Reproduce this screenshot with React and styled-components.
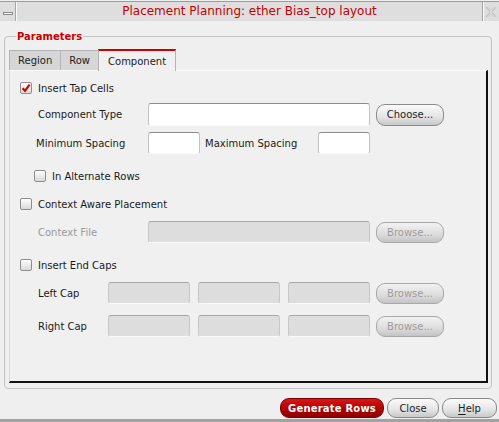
import React from 'react';
import styled, { createGlobalStyle } from 'styled-components';

const GlobalStyle = createGlobalStyle`
    html, body {
        margin: 0;
        padding: 0;
        background: #efefef;
    }
    body {
        font-family: "DejaVu Sans", Verdana, sans-serif;
        font-size: 10px;
        color: #1e1e1e;
    }
`

const Window = styled.div`
    width: 499px;
    height: 422px;
    display: flex;
    flex-direction: column;
    background: #efefef;
    overflow: hidden;
`

const TitleBar = styled.div`
    display: flex;
    height: 19px;
    margin-top: 1px;
    border-top: 1px solid #9c9c9c;
    background: #dedede;
`

const TitleButton = styled.div`
    width: ${p => p.$w}px;
    display: flex;
    align-items: center;
    justify-content: center;
    border-left: ${p => (p.$side === 'right' ? '1px solid #a6a6a6' : 'none')};
    border-right: ${p => (p.$side === 'left' ? '1px solid #a6a6a6' : 'none')};
    box-shadow: ${p => (p.$side === 'left' ? '1px 0 0 #fafafa' : 'inset 1px 0 0 #fafafa')};
`

const TitleText = styled.div`
    flex: 1;
    display: flex;
    align-items: center;
    justify-content: center;
    margin-left: 1px;
    font-size: 12px;
    color: #c40000;
    padding-bottom: 1px;
`

const Body = styled.div`
    flex: 1;
    display: flex;
    flex-direction: column;
    padding: 9px 0 0 4px;
    min-height: 0;
`

const Group = styled.fieldset`
    flex: 1;
    margin: 0 7px 0 0;
    padding: 5px 3px 5px 4px;
    border: 1px solid #c4c4c4;
    border-radius: 4px;
    display: flex;
    flex-direction: column;
    min-width: 0;
    min-height: 0;
`

const Legend = styled.legend`
    margin-left: 7px;
    padding: 0 1px;
    font-weight: bold;
    font-size: 10px;
    line-height: 13px;
    color: #cc0000;
`

const TabBar = styled.div`
    display: flex;
    align-items: flex-end;
    height: 22px;
`

const Tab = styled.div`
    height: 20px;
    padding: 0 ${p => (p.$active ? 9 : 8)}px;
    display: flex;
    align-items: center;
    box-sizing: border-box;
    background: ${p => (p.$active ? '#f0f0f0' : '#d6d6d6')};
    border: 1px solid #b4b4b4;
    border-bottom: none;
    border-top: ${p => (p.$active ? '2px solid #cc0000' : '1px solid #b4b4b4')};
    margin-left: -1px;
    color: #222;
    &:first-child { margin-left: 0; }
    ${p => p.$active && 'height: 22px; margin-bottom: -1px; position: relative; z-index: 1;'}
`

const TabPanel = styled.div`
    flex: 1;
    display: flex;
    flex-direction: column;
    border-top: 1px solid #fbfbfb;
    border-left: 1px solid #d8d8d8;
    border-right: 2px solid #111;
    border-bottom: 2px solid #111;
    padding-left: 10px;
    background: #f0f0f0;
`

const Row = styled.div`
    display: flex;
    align-items: center;
    height: ${p => p.$h}px;
    margin-top: ${p => p.$mt}px;
    padding-left: ${p => p.$indent || 0}px;
`

const Box = styled.span`
    width: 12px;
    height: 12px;
    box-sizing: border-box;
    border: 1px solid #8e8e8e;
    border-radius: 2px;
    background: linear-gradient(#fdfdfd, #dadada);
    display: flex;
    align-items: center;
    justify-content: center;
    margin-right: 6px;
    flex-shrink: 0;
`

const Label = styled.span`
    width: ${p => (p.$w ? `${p.$w}px` : 'auto')};
    flex-shrink: 0;
    color: ${p => (p.$disabled ? '#9a9a9a' : '#1a1a1a')};
    white-space: nowrap;
`

const Field = styled.div`
    width: ${p => p.$w}px;
    height: ${p => p.$h || 22}px;
    box-sizing: border-box;
    margin-right: ${p => p.$mr || 0}px;
    border: 1px solid ${p => (p.$disabled ? '#c8c8c8' : '#c2c2c2')};
    border-top-color: ${p => (p.$disabled ? '#a8a8a8' : '#8c8c8c')};
    border-bottom-color: #fafafa;
    border-radius: 3px;
    background: ${p => (p.$disabled ? '#dddddd' : '#ffffff')};
    flex-shrink: 0;
`

const Button = styled.button`
    width: ${p => p.$w}px;
    height: ${p => p.$h || 21}px;
    padding: 0;
    font-family: inherit;
    font-size: 10px;
    font-weight: ${p => (p.$primary ? 'bold' : 'normal')};
    letter-spacing: ${p => (p.$primary ? '0.2px' : '0')};
    color: ${p => (p.$primary ? '#ffffff' : p.$disabled ? '#9c9c9c' : '#1e1e1e')};
    border: 1px solid ${p => (p.$primary ? '#7a0000' : p.$disabled ? '#a8a8a8' : '#8a8a8a')};
    border-radius: 9px;
    background: ${p => (p.$primary
        ? 'linear-gradient(#d81818, #b00000 55%, #8e0000)'
        : p.$disabled
            ? 'linear-gradient(#f2f2f2, #dcdcdc 60%, #c4c4c4)'
            : 'linear-gradient(#fbfbfb, #e4e4e4 60%, #c8c8c8)')};
    flex-shrink: 0;
    u { text-decoration-thickness: 1px; text-underline-offset: 2px; }
`

const Footer = styled.div`
    display: flex;
    justify-content: flex-end;
    gap: 3px;
    padding: 9px 2px 1px 0;
`

const BottomEdge = styled.div`
    height: 3px;
    background: #a2a2a2;
`

const CheckBox = ({ checked }) => (
    <Box>
        {checked && (
            <svg width="10" height="10" viewBox="0 0 10 10">
                <path d="M1.6 5.2 L4 7.8 L8.6 1.6" fill="none" stroke="#d40000" strokeWidth="2.2" strokeLinejoin="miter" />
            </svg>
        )}
    </Box>
)

const MinimizeIcon = () => (
    <svg width="12" height="5" viewBox="0 0 12 5" style={{ marginTop: 3 }}>
        <rect x="1.5" y="1.5" width="9" height="2" fill="#fbfbfb" stroke="#8a8a8a" />
    </svg>
)

const CloseIcon = () => (
    <svg width="12" height="12" viewBox="0 0 12 12">
        <path d="M1 1 L5 5.5 M11 1 L7 5.5 M1 11 L5 6.5 M11 11 L7 6.5" fill="none" stroke="#c6c6c6" strokeWidth="1.6" />
        <path d="M3 1 L6 4 L9 1 M3 11 L6 8 L9 11" fill="none" stroke="#cfcfcf" strokeWidth="1" />
    </svg>
)

const App = () => {
    return (
        <Window>
            <GlobalStyle />
            <TitleBar>
                <TitleButton $w={15} $side="left"><MinimizeIcon /></TitleButton>
                <TitleText>Placement Planning: ether Bias_top layout</TitleText>
                <TitleButton $w={16} $side="right"><CloseIcon /></TitleButton>
            </TitleBar>
            <Body>
                <Group>
                    <Legend>Parameters</Legend>
                    <TabBar>
                        <Tab>Region</Tab>
                        <Tab>Row</Tab>
                        <Tab $active>Component</Tab>
                    </TabBar>
                    <TabPanel>
                        <Row $h={16} $mt={9}>
                            <CheckBox checked />
                            <Label>Insert Tap Cells</Label>
                        </Row>
                        <Row $h={23} $mt={7} $indent={18}>
                            <Label $w={110}>Component Type</Label>
                            <Field $w={222} $h={23} $mr={6} />
                            <Button $w={68} $h={22}>Choose...</Button>
                        </Row>
                        <Row $h={22} $mt={6} $indent={16}>
                            <Label $w={112}>Minimum Spacing</Label>
                            <Field $w={52} $mr={5} />
                            <Label $w={113}>Maximum Spacing</Label>
                            <Field $w={52} />
                        </Row>
                        <Row $h={16} $mt={14} $indent={14}>
                            <CheckBox />
                            <Label>In Alternate Rows</Label>
                        </Row>
                        <Row $h={16} $mt={12}>
                            <CheckBox />
                            <Label>Context Aware Placement</Label>
                        </Row>
                        <Row $h={22} $mt={9} $indent={18}>
                            <Label $w={110} $disabled>Context File</Label>
                            <Field $w={222} $mr={6} $disabled />
                            <Button $w={68} $disabled>Browse...</Button>
                        </Row>
                        <Row $h={16} $mt={14}>
                            <CheckBox />
                            <Label>Insert End Caps</Label>
                        </Row>
                        <Row $h={22} $mt={9} $indent={18}>
                            <Label $w={70}>Left Cap</Label>
                            <Field $w={82} $mr={8} $disabled />
                            <Field $w={82} $mr={8} $disabled />
                            <Field $w={82} $mr={6} $disabled />
                            <Button $w={68} $disabled>Browse...</Button>
                        </Row>
                        <Row $h={22} $mt={11} $indent={18}>
                            <Label $w={70}>Right Cap</Label>
                            <Field $w={82} $mr={8} $disabled />
                            <Field $w={82} $mr={8} $disabled />
                            <Field $w={82} $mr={6} $disabled />
                            <Button $w={68} $disabled>Browse...</Button>
                        </Row>
                    </TabPanel>
                </Group>
                <Footer>
                    <Button $w={104} $h={20} $primary>Generate Rows</Button>
                    <Button $w={52} $h={20}>Close</Button>
                    <Button $w={55} $h={20}><u>H</u>elp</Button>
                </Footer>
            </Body>
            <BottomEdge />
        </Window>
    );
}

export default App;
